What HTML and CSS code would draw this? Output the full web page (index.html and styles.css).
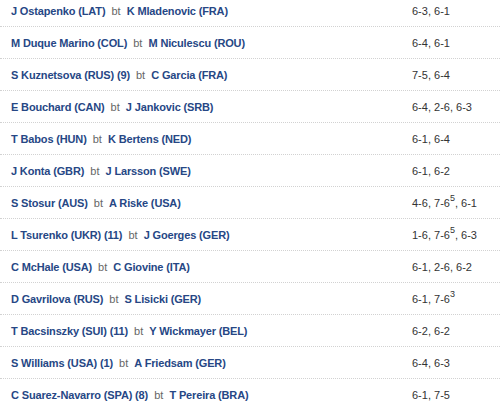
FILE: index.html
```html
<!DOCTYPE html>
<html>
<head>
<meta charset="utf-8">
<link rel="stylesheet" href="styles.css">
</head>
<body>
<div class="results">
  <div class="row"><div class="match"><b>J Ostapenko (LAT)</b> <span class="bt">bt</span> <b>K Mladenovic (FRA)</b></div><div class="score">6-3, 6-1</div></div>
  <div class="row"><div class="match"><b>M Duque Marino (COL)</b> <span class="bt">bt</span> <b>M Niculescu (ROU)</b></div><div class="score">6-4, 6-1</div></div>
  <div class="row"><div class="match"><b>S Kuznetsova (RUS) (9)</b> <span class="bt">bt</span> <b>C Garcia (FRA)</b></div><div class="score">7-5, 6-4</div></div>
  <div class="row"><div class="match"><b>E Bouchard (CAN)</b> <span class="bt">bt</span> <b>J Jankovic (SRB)</b></div><div class="score">6-4, 2-6, 6-3</div></div>
  <div class="row"><div class="match"><b>T Babos (HUN)</b> <span class="bt">bt</span> <b>K Bertens (NED)</b></div><div class="score">6-1, 6-4</div></div>
  <div class="row"><div class="match"><b>J Konta (GBR)</b> <span class="bt">bt</span> <b>J Larsson (SWE)</b></div><div class="score">6-1, 6-2</div></div>
  <div class="row"><div class="match"><b>S Stosur (AUS)</b> <span class="bt">bt</span> <b>A Riske (USA)</b></div><div class="score">4-6, 7-6<sup>5</sup>, 6-1</div></div>
  <div class="row"><div class="match"><b>L Tsurenko (UKR) (11)</b> <span class="bt">bt</span> <b>J Goerges (GER)</b></div><div class="score">1-6, 7-6<sup>5</sup>, 6-3</div></div>
  <div class="row"><div class="match"><b>C McHale (USA)</b> <span class="bt">bt</span> <b>C Giovine (ITA)</b></div><div class="score">6-1, 2-6, 6-2</div></div>
  <div class="row"><div class="match"><b>D Gavrilova (RUS)</b> <span class="bt">bt</span> <b>S Lisicki (GER)</b></div><div class="score">6-1, 7-6<sup>3</sup></div></div>
  <div class="row"><div class="match"><b>T Bacsinszky (SUI) (11)</b> <span class="bt">bt</span> <b>Y Wickmayer (BEL)</b></div><div class="score">6-2, 6-2</div></div>
  <div class="row"><div class="match"><b>S Williams (USA) (1)</b> <span class="bt">bt</span> <b>A Friedsam (GER)</b></div><div class="score">6-4, 6-3</div></div>
  <div class="row"><div class="match"><b>C Suarez-Navarro (SPA) (8)</b> <span class="bt">bt</span> <b>T Pereira (BRA)</b></div><div class="score">6-1, 7-5</div></div>
</div>
</body>
</html>
```
FILE: styles.css
```css
html, body {
  margin: 0;
  padding: 0;
  background: #ffffff;
  overflow: hidden;
}
body {
  font-family: "Liberation Sans", Arial, sans-serif;
  font-size: 11px;
}
.results {
  margin-top: -5px;
}
.row {
  display: grid;
  grid-template-columns: 412px 1fr;
  align-items: center;
  height: 31px;
  border-bottom: 1px dotted #d2d2d2;
}
.match {
  padding-left: 11px;
  white-space: nowrap;
  color: #555;
}
.match b {
  color: #264785;
  font-weight: bold;
  letter-spacing: -0.15px;
}
.bt {
  color: #666;
  padding: 0 3px;
}
.score {
  color: #333;
  white-space: nowrap;
}
.score sup {
  font-size: 9px;
  line-height: 0;
  vertical-align: 6px;
}
```
